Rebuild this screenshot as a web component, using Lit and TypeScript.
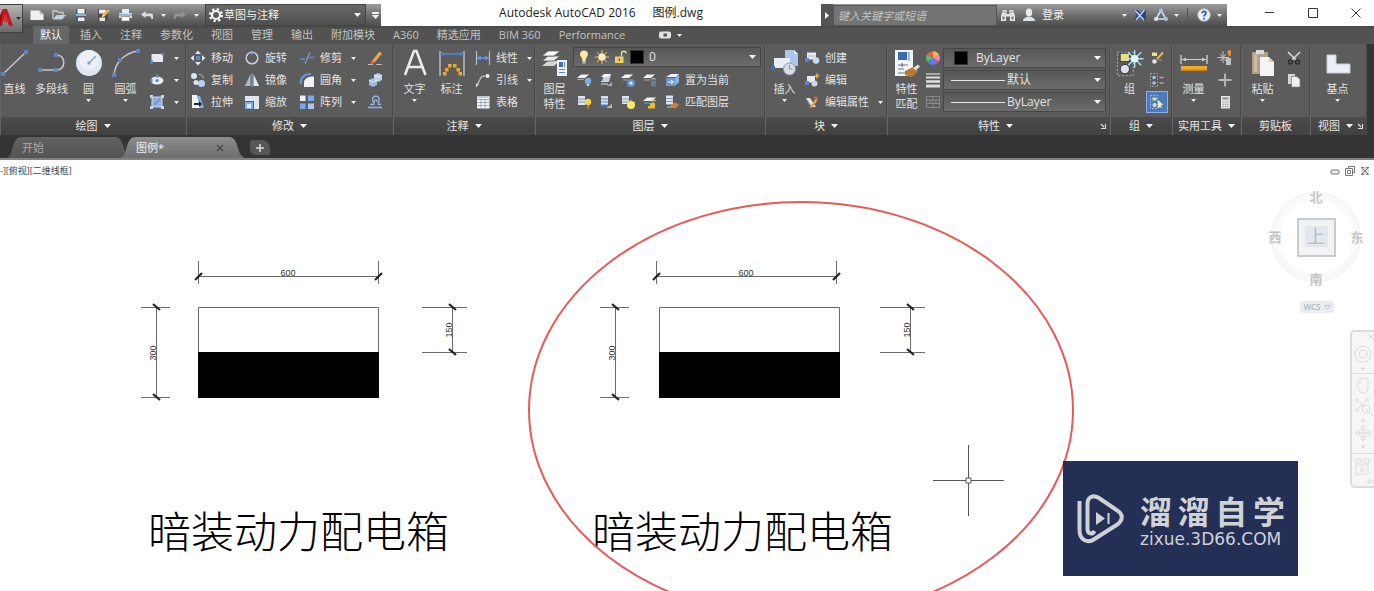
import { LitElement, html, svg, css, nothing, TemplateResult, SVGTemplateResult } from "lit";
import { customElement, property } from "lit/decorators.js";
import { classMap } from "lit/directives/class-map.js";

/* ---------- icon library ---------- */

interface Glyph { w: number; h: number; art: SVGTemplateResult; }

const g = (w: number, h: number, art: SVGTemplateResult): Glyph => ({ w, h, art });

const ICONS: Record<string, Glyph> = {
  /* quick access */
  newFile: g(16, 16, svg`<path d="M1.500 3.500h9l4 4v5.500h-13z" fill="#f0f0f0"/><path d="M10.500 3.500v4h4z" fill="#bdbdbd"/>`),
  open: g(16, 16, svg`<path d="M2 12V4h4l1.500 1.500H12V8" fill="none" stroke="#c9c9c9" stroke-width="1.300"/><path d="M2 12.500 5.500 8H15l-4 4.500z" fill="#c3d0de"/>`),
  save: g(16, 16, svg`<path d="M3 2h10v12H3z" fill="#4d5b6b"/><path d="M4.500 2h7v4.500h-7z" fill="#f2f2f2"/><path d="M3 7h10v2H3z" fill="#8fb3da"/><path d="M5 10.500h6.500V14H5z" fill="#ececec"/>`),
  saveAs: g(16, 16, svg`<path d="M3 2h10v12H3z" fill="#4d4d4d"/><path d="M4 2.500h7v4H4z" fill="#ededed"/><path d="M4.500 10.500H10V14H4.500z" fill="#e6e6e6"/><path d="m7 10 1-3 4.500-5L15 4l-5 5z" fill="#eeb04a"/><path d="m7 10 1-3 2 2z" fill="#f9e2b0"/>`),
  print: g(16, 16, svg`<path d="M5 2h7v4H5z" fill="#e9eef4"/><path d="M2 6h13v5H2z" fill="#d4d9df"/><path d="M4.500 9.500h8V14h-8z" fill="#fff" stroke="#7f8b99" stroke-width=".8"/><path d="M2 8h13" stroke="#6d90b8"/>`),
  undo: g(16, 16, svg`<path d="M2 7.500 6.500 4v2.500H12c1.500 0 2 1 2 2.500V12h-1.700c0-2-.3-2.800-1.500-2.800H6.500V11z" fill="#dcdcdc"/>`),
  redo: g(16, 16, svg`<path d="M14 7.500 9.500 4v2.500H4C2.500 6.500 2 7.500 2 9v3h1.700c0-2 .3-2.800 1.500-2.800h4.300V11z" fill="#959595"/>`),
  gear: g(16, 16, svg`<circle cx="8" cy="8" r="4" fill="none" stroke="#f4f4f4" stroke-width="2.200"/><circle cx="8" cy="8" r="6" fill="none" stroke="#f4f4f4" stroke-width="2.200" stroke-dasharray="2.350 2.360"/>`),
  binoculars: g(16, 16, svg`<path d="M3 3h3.500v4h3V3H13l2 6v5h-5V9.500H6V14H1V9z" fill="#e4e4e4"/><path d="M2.500 9.500h2v3h-2zM11.500 9.500h2v3h-2z" fill="#777"/><path d="M3.500 5h2M10.500 5h2" stroke="#777"/>`),
  user: g(16, 16, svg`<ellipse cx="8" cy="5.500" rx="3.200" ry="4" fill="#ececec"/><path d="M2 14c0-3 2.500-3.300 4.300-4.300h3.400C11.500 10.700 14 11 14 14z" fill="#dfe3e8"/>`),
  exchange: g(16, 16, svg`<path d="M2 3h4l2 3 3-3h3v10h-3L8 10l-2 3H2l2.500-5z" fill="#27438f"/><path d="m3 3.500 9 9.500M12.500 3 4 13" stroke="#c3d1f1" stroke-width="1.500"/>`),
  a360: g(16, 16, svg`<path d="M8 3.500 3 12h10z" fill="none" stroke="#d3def2" stroke-width="1.600"/><circle cx="8" cy="3.500" r="2" fill="#a9c1ea"/><circle cx="3" cy="12" r="2" fill="#dbe6f8"/><circle cx="13" cy="12" r="2" fill="#a9c1ea"/>`),
  help: g(16, 16, svg`<circle cx="8" cy="8" r="6.200" fill="#eef3fb" stroke="#b8c2d2"/><path d="M6 6.300C6 3.800 10 3.900 10 6.300 10 7.800 8 7.800 8 9.600M8 10.800v1.700" fill="none" stroke="#2b56ab" stroke-width="1.700"/>`),
  camera: g(16, 16, svg`<rect x="2" y="4.500" width="12" height="7" rx="2" fill="#e4e4e4"/><rect x="6.500" y="6.500" width="3.500" height="3" fill="#555"/>`),
  /* draw */
  line: g(28, 28, svg`<path d="M2 25 25 3" stroke="#c6c6c6" stroke-width="1.400"/><path d="M0 23h4v4H0zM23 1h4v4h-4z" fill="#5b86cc"/>`),
  polyline: g(28, 28, svg`<path d="M2 21h17c9 0 9-15 0-15h-1" fill="none" stroke="#c6c6c6" stroke-width="1.600"/><path d="M0 19h4v4H0zM16 19h4v4h-4zM16 4h4v4h-4z" fill="#5b86cc"/>`),
  circle: g(28, 28, svg`<circle cx="14" cy="14" r="13" fill="#dfe6f1"/><circle cx="14" cy="11" r="10" fill="#edf1f7"/><path d="m14 14 7-7" stroke="#7c9fd4" stroke-width="1.300"/><path d="M12.500 12.500h3v3h-3z" fill="#7c9fd4"/>`),
  arc: g(28, 28, svg`<path d="M2 26C3 13 13 4 26 2" fill="none" stroke="#c6c6c6" stroke-width="1.500"/><path d="M0 24h4v4H0zM6 9h4v4H6zM24 0h4v4h-4z" fill="#5b86cc"/>`),
  rect: g(16, 16, svg`<path d="M2.500 4H14v8H2.500z" fill="#e7ecf4"/><path d="M15 2v5l-3-3z" fill="#5b86cc"/><path d="M1 10.500h3v3H1z" fill="#5b86cc"/>`),
  ellipse: g(16, 16, svg`<ellipse cx="8" cy="8.500" rx="6.500" ry="4" fill="#e7ecf4"/><circle cx="8" cy="8.500" r="1.600" fill="#5b86cc"/><path d="M6.800 2.500h3v3h-3zM1 7h2.500v3H1z" fill="#5b86cc"/>`),
  hatch: g(16, 16, svg`<path d="M3 3h10v10H3z" fill="#93b4e6" stroke="#c5d6ef"/><path d="M1 1h3v3H1zM12 1h3v3h-3zM1 12h3v3H1zM12 12h3v3h-3z" fill="#c8d6ea"/><path d="m5 11 6-6" stroke="#6f98d6" stroke-width="2"/>`),
  /* modify */
  move: g(16, 16, svg`<path d="m8 .5 3 3.500H5zM8 15.500 5 12h6zM.5 8 4 5v6zM15.500 8 12 11V5z" fill="#dfe6f0"/><path d="M6 6h4v4H6z" fill="#5b86cc"/>`),
  rotate: g(16, 16, svg`<circle cx="8" cy="8" r="5.800" fill="none" stroke="#c9ced6" stroke-width="1.500"/><path d="m6.500.5 4 2-3.500 2.500z" fill="#7ea4dc"/>`),
  trim: g(16, 16, svg`<path d="M1 9h5M9.500 7.500H15" stroke="#5b8bd0" stroke-width="1.600"/><path d="M11 2 6 14" stroke="#7f9fce" stroke-width="1.200"/>`),
  erase: g(16, 16, svg`<path d="m5 11 7.500-9.500L15 3.500 8 12z" fill="#efaa3d"/><path d="m3 13 2-2.500L8 12l-2 2z" fill="#e8694d"/><path d="M1 14.500h5M9 14.500h6" stroke="#bbb" stroke-width="1.200"/>`),
  copy: g(16, 16, svg`<circle cx="4" cy="4" r="3" fill="#dbe5f4"/><circle cx="11.500" cy="11.500" r="3.500" fill="#b7d0f2"/><circle cx="6" cy="10.500" r="2.500" fill="#dbe5f4"/><path d="M9 2.500c3 0 4 1 4 4" fill="none" stroke="#b9b9b9"/>`),
  mirror: g(16, 16, svg`<path d="M6.500 2v12H1z" fill="#aeb9c8"/><path d="M9.500 2v12H15z" fill="#dfe7f2"/><path d="M8 1v14" stroke="#7ea4dc"/>`),
  fillet: g(16, 16, svg`<path d="M5 15v-5c1-4 4-5.500 10-5.500V15z" fill="#f1f3f6"/><path d="M1.500 12C1.500 5 5 2 12 2" fill="none" stroke="#6c98d9" stroke-width="2"/>`),
  explode: g(16, 16, svg`<path d="m2 8 4-2 4 2v5l-4 2-4-2z" fill="#9cb9df"/><path d="m7 3 4-2 4 2v5l-4 2-4-2z" fill="#b9cfeb"/><path d="m7 3 4 2 4-2M2 8l4 2 4-2" stroke="#eef4fb" fill="none"/>`),
  stretch: g(16, 16, svg`<path d="M2 1h5l4 13H2z" fill="#f3f5f8"/><path d="M7 2h3l4 12h-4z" fill="#7fb0ee"/><path d="M4 9h5v-2l3 3-3 3v-2H4z" fill="#222"/>`),
  scale: g(16, 16, svg`<path d="M1 2h14v13h-5V7H1z" fill="#dfe6f0"/><path d="M1 8h8v7H1z" fill="#7fb0ee"/><path d="M3 10h4v4H3z" fill="#dfe9f8"/>`),
  array: g(16, 16, svg`<path d="M1 1.500h5.500V7H1z" fill="#f1f1f1"/><path d="M9 1.500h6V7H9zM1 9.500h5.500V15H1z" fill="#79a9ea"/><path d="M9 9.500h6V15H9z" fill="#a8c6f0"/>`),
  offset: g(16, 16, svg`<path d="M1 13.500h14M3 10.500h4V9C4 6 6 2 9 2s4 4 2.500 6.500v2H14" fill="none" stroke="#8fb2e2" stroke-width="1.400"/><path d="M7.500 8C7 5 10.500 4.500 10 8" fill="none" stroke="#c9d6e8"/>`),
  /* annotate */
  bigA: g(28, 28, svg`<path d="M4 26 13 2h2.500l9 24M7.500 18h13.500" fill="none" stroke="#ececec" stroke-width="2.600"/>`),
  dimension: g(28, 28, svg`<path d="M2 2v25M26 2v25" stroke="#c4c4c4" stroke-width="1.400"/><path d="M2 5h24" stroke="#4f86d8" stroke-width="1.600"/><path d="m2 5 4-2v4zM26 5l-4-2v4z" fill="#4f86d8"/><path d="M10 15h3.500v3.500H10zM15 15h3.500v3.500H15zM7 19h3.500v3.500H7zM18.500 19H22v3.500h-3.500zM5 23h3.500v3.500H5zM20.500 23H24v3.500h-3.500z" fill="#e8a92e"/>`),
  linear: g(16, 16, svg`<path d="M1.500 1v14M14.500 1v14" stroke="#b5bcc6" stroke-width="1.200"/><path d="M2 8h12" stroke="#5b9bea" stroke-width="1.500"/><path d="m2 8 4-2.500v5zM14 8l-4-2.500v5z" fill="#5b9bea"/>`),
  leader: g(16, 16, svg`<path d="M1 15 6 5.500C7 4 8 4 10 4" fill="none" stroke="#c0c0c0" stroke-width="1.400"/><circle cx="12.500" cy="4" r="2" fill="#f1f1f1"/><path d="m1 15 .5-4L4 12.500z" fill="#d8d8d8"/>`),
  table: g(16, 16, svg`<path d="M2 2h12.500v12.500H2z" fill="#f3f5f8"/><path d="M2 5.500h12.500M2 8.500h12.500M2 11.500h12.500M6 5v9.500M10.200 5v9.500" stroke="#98a5b8" stroke-width=".9"/><path d="M2 2h12.500v2H2z" fill="#bccbe0"/>`),
  /* layers */
  layerProps: g(28, 28, svg`<path d="m1 17 6-5h12l-6 5z" fill="#d5d5d5"/><path d="m1 12 6-5h12l-6 5z" fill="#ececec" stroke="#5c5c5c" stroke-width=".8"/><path d="m1 7 6-5h12l-6 5z" fill="#fff" stroke="#5c5c5c" stroke-width=".8"/><path d="M16 11h10v16H16z" fill="#eef2f8"/><path d="M18 13h4v5h-4z" fill="#3f6fb6"/><path d="M18 20.500h6M18 23.500h6M23.500 13v5" stroke="#5f84ba"/>`),
  bulb: g(16, 16, svg`<path d="M8 1.500c4.500 0 5 5 2.300 7L9.500 12h-3L5.700 8.500C3 6.500 3.500 1.500 8 1.500z" fill="#fbe9a4"/><path d="M6.500 12h3v2.500h-3z" fill="#c2c2c2"/>`),
  sun: g(16, 16, svg`<circle cx="8" cy="8" r="3.800" fill="#fbe07c"/><path d="M8 1v14M1 8h14M3 3l10 10M13 3 3 13" stroke="#f4d873" stroke-width=".9"/><circle cx="8" cy="8" r="3" fill="#fdf0bd"/>`),
  unlock: g(16, 16, svg`<path d="M3 7.500h8.500V14H3z" fill="#f0cf66"/><path d="M9.500 7.500V4.500c0-3 4.500-3 4.500 0" fill="none" stroke="#e8d9a2" stroke-width="1.400"/><path d="M6.500 9.500h1.500V12H6.500z" fill="#85681d"/>`),
  layerA: g(16, 16, svg`<path d="m1 6 4-3.500h8L9 6z" fill="#f3f3f3"/><path d="M1 7.500h7" stroke="#93a7c4"/><circle cx="12" cy="9" r="3.200" fill="#74b0ef"/><path d="M10.800 12h2.400v2h-2.400z" fill="#d5d5d5"/>`),
  layerB: g(16, 16, svg`<path d="M6 2h7l-2 8H4z" fill="#bcd2ec"/><path d="m3 5 3-3h7l-3 3z" fill="#f5f5f5"/><path d="M3 12h7M3 9.500h7" stroke="#ddd"/><path d="m9 14 5-4v4z" fill="#aaa"/>`),
  layerC: g(16, 16, svg`<path d="m1 6 4-3.500h8L9 6z" fill="#f3f3f3"/><path d="M3 8h5" stroke="#aaa"/><circle cx="11" cy="11" r="4" fill="#5d93dc"/><circle cx="11" cy="11" r="1.600" fill="#e3eefb"/>`),
  layerD: g(16, 16, svg`<path d="m1 6 4-3.500h8L9 6z" fill="#f3f3f3"/><path d="M2 8h6" stroke="#aaa"/><path d="M9 8.500h5v6H9z" fill="#6b7f8c"/><path d="M10 8V6.500h3V8" stroke="#a4c1be" fill="none"/>`),
  layerCurrent: g(16, 16, svg`<path d="m2 5 5-3h8l-3 3z" fill="#f5f5f5"/><path d="M2 6h9v8H2z" fill="#6d97ce"/><path d="m11 6 4-3v7l-4 4z" fill="#8db2e2"/><path d="M4 10h5M7 8l2.500 2L7 12" stroke="#fff" fill="none"/>`),
  layerE: g(16, 16, svg`<path d="M2 2h7v9H2z" fill="#dce5f0"/><path d="M2 5h7M2 8h7" stroke="#7e95b6"/><circle cx="12" cy="8" r="3.300" fill="#f6cf53"/><path d="M11 11h2.200v3.500H11z" fill="#bd8636"/>`),
  layerF: g(16, 16, svg`<path d="M3 2h7v9H3z" fill="#d4e1f0"/><path d="M3 5h7M3 8h7" stroke="#6d8db9"/><path d="m8 14 6-4v4z" fill="#bbb"/><path d="M3 11.500h7" stroke="#4779c4" stroke-width="2"/>`),
  layerG: g(16, 16, svg`<path d="M2 2h7v8H2z" fill="#dce5f0"/><path d="M2 5h7M2 8h7" stroke="#8b9cb5"/><circle cx="11" cy="11" r="4" fill="#fbe56b"/><path d="M11 5.500v2M15 8l-1.500 1" stroke="#f6cf53"/>`),
  layerH: g(16, 16, svg`<path d="m1 7 4-3.500h9L10 7z" fill="#f3f3f3"/><path d="M2 9h6" stroke="#6d97ce"/><path d="M8 9h5v5.500H6V12h2z" fill="#e3bd3b"/><path d="M11 9V6.500h3" stroke="#d7c16c" fill="none"/>`),
  layerMatch: g(16, 16, svg`<path d="M2 1.500h7v9H2z" fill="#dce5f0"/><path d="M2 4.500h7M2 7.500h7" stroke="#8b9cb5"/><path d="m7 11 4-2.500 4 2-3 3.500-4 0z" fill="#de7b33"/><path d="M3 13h5" stroke="#ccc"/>`),
  /* block */
  insert: g(28, 28, svg`<path d="M14 1h9l4 4v12H14z" fill="#a8c8f0"/><path d="M23 1v4h4z" fill="#e3eefb"/><path d="M3 9h16v10H3z" fill="#e9edf3"/><path d="M0 17h4v4H0z" fill="#3f6fb6"/><circle cx="18.500" cy="20" r="6" fill="#d6dde7" stroke="#8f9cae"/><path d="M18.500 16v4h3" stroke="#7f92ad" fill="none"/>`),
  create: g(16, 16, svg`<path d="M3 2.500h9v7H3z" fill="#e6ebf2"/><circle cx="12" cy="10.500" r="3.300" fill="#cfd8e4"/><path d="M1 8h4v4H1z" fill="#5b86cc"/><path d="M4 6h7" stroke="#aab6c8"/>`),
  editBlock: g(16, 16, svg`<path d="M3 4h8v6.500H3z" fill="#e6ebf2"/><circle cx="10.500" cy="11.500" r="3" fill="#cfd8e4"/><path d="M1 9h4v4H1z" fill="#5b86cc"/><path d="M13 .5 14 3l2 .8-2 1L13 7l-1-2.200-2-1L12 3z" fill="#f2b13b"/>`),
  editAttr: g(16, 16, svg`<path d="M2 4h4l6 9H8z" fill="#e5e5e5"/><path d="m6 13 5-7.500L13.500 4 13 7l-5 7z" fill="#e8a63c"/><path d="m2 4 5 10" stroke="#999"/><path d="M10 3.500h3" stroke="#d45f4d" stroke-width="2"/>`),
  /* properties */
  matchProps: g(28, 28, svg`<path d="M2 1h18v26H2z" fill="#f2f4f7"/><path d="M5 3h9v8H5z" fill="#346cb5"/><path d="M16 3v9" stroke="#9fb6d4" stroke-width="2"/><path d="M5 16h10M5 20h6M5 24h8" stroke="#66768c"/><path d="M9 14v4" stroke="#2f5d9d"/><path d="m12 22 8-4 5 4-6 6-7-2z" fill="#c0762f"/><path d="m20 19 5-3.500 2 2-4 4z" fill="#ddd"/>`),
  wheel: g(16, 16, svg`<path d="M8 8V1.200A6.800 6.800 0 0 1 13.900 4.600z" fill="#f2c14a"/><path d="M8 8 13.900 4.600a6.800 6.800 0 0 1 0 6.800z" fill="#f08bb0"/><path d="m8 8 5.900 3.400A6.800 6.800 0 0 1 8 14.800z" fill="#9365c9"/><path d="M8 8v6.800a6.800 6.800 0 0 1-5.900-3.400z" fill="#4d83dc"/><path d="m8 8-5.900 3.400a6.800 6.800 0 0 1 0-6.800z" fill="#5fbf67"/><path d="M8 8 2.100 4.600A6.800 6.800 0 0 1 8 1.200z" fill="#e06545"/>`),
  weights: g(16, 16, svg`<path d="M1 2h14" stroke="#ddd" stroke-width="1.200"/><path d="M1 5.500h14" stroke="#ddd" stroke-width="2"/><path d="M1 9.500h14" stroke="#ddd" stroke-width="2.600"/><path d="M1 14h14" stroke="#ddd" stroke-width="3"/>`),
  linetype: g(16, 16, svg`<path d="M1.500 2.500h13v11h-13zM1.500 6h13M1.500 9.500h13M5 6v3.500M8 2.500V13.500M11 6v3.500" fill="none" stroke="#8a8a8a"/>`),
  /* group */
  group: g(30, 30, svg`<path d="M1.500 3.500h17v25h-17z" fill="none" stroke="#b6b6b6" stroke-dasharray="2 2"/><path d="M4 4h11v10H4z" fill="#333"/><path d="M5 5h9v8H5z" fill="#ecdf7d"/><circle cx="9.500" cy="21.500" r="5" fill="#dce4ee" stroke="#333"/><path d="M20 1v19M10.500 10.500h19M13 3.500l14 14M27 3.500l-14 14" stroke="#a9e0f5" stroke-width="1.500"/><circle cx="20" cy="10.500" r="4" fill="#e9f9fe"/>`),
  groupEdit: g(16, 16, svg`<path d="M3 2.500h5v3.500H3z" fill="#ecdf7d"/><circle cx="5.500" cy="11.500" r="2.300" fill="#dce4ee"/><path d="m8 9 6-6.500" stroke="#e8b34a" stroke-width="2"/><path d="M9.500 10h3" stroke="#aaa"/>`),
  ungroup: g(16, 16, svg`<path d="M1.500 1.500h7v13h-7z" fill="none" stroke="#aaa" stroke-dasharray="1.500 1.500"/><path d="M3.500 4h3v3h-3zM3.500 9.500h3v3h-3z" fill="#a9c4e6"/><path d="M10.500 5.500h4M10.500 11h4" stroke="#aaa" stroke-width="1.500"/>`),
  groupSel: g(16, 16, svg`<path d="M1.500 1.500h7v13h-7z" fill="none" stroke="#a9c4f0" stroke-dasharray="1.500 1.500"/><path d="M3.500 3.500h4v3h-4z" fill="#ecdf7d"/><circle cx="5.500" cy="11" r="2" fill="#dce4ee"/><path d="m9 6 5.500 5H12l1 3-2-1-2 1z" fill="#e7edb5"/>`),
  /* utilities */
  measure: g(28, 28, svg`<path d="M1 6v9M27 6v9" stroke="#ccc" stroke-width="1.400"/><path d="M2 10.500h24" stroke="#ccc"/><path d="m2 10.500 4-2v4zM26 10.500l-4-2v4z" fill="#ccc"/><path d="M1 17h26v5H1z" fill="#f0ab2c"/><path d="M1 20.500h26V22H1z" fill="#c98413"/>`),
  pick: g(16, 16, svg`<path d="M6 1v12M.5 7.500h11M3 4l6 7M9 4l-6 7" stroke="#c9c9c9"/><path d="M9 8h5v7H9z" fill="#bfc3c8"/><path d="m10 1 4-1v5l-2 2z" fill="#f0902c"/>`),
  point: g(16, 16, svg`<path d="M8 1.500v13M1.500 8h13" stroke="#d8d8d8" stroke-width="1.400"/><circle cx="8" cy="8" r="2" fill="#b5b5b5"/>`),
  calc: g(16, 16, svg`<path d="M4 2h9v12.500H4z" fill="#e4e4e4"/><path d="M5.500 3.500h6v2h-6z" fill="#8b8b8b"/><path d="M5.500 8h6M5.500 10.300h6M5.500 12.500h6" stroke="#999" stroke-dasharray="1.500 .8"/>`),
  /* clipboard, view */
  paste: g(28, 28, svg`<path d="M3 3h16v22H3z" fill="#b49f86"/><path d="M7 1h8v4H7z" fill="#dcdcdc"/><path d="M5 5h3v18H5z" fill="#cdbca6"/><path d="M11 8h9l5 5v14H11z" fill="#f4f4f5"/><path d="M20 8v5h5z" fill="#c9c9ce"/>`),
  cut: g(16, 16, svg`<path d="m2 2 8 8M14 2l-8 8" stroke="#d9d9d9" stroke-width="1.600"/><circle cx="4.500" cy="12" r="2" fill="none" stroke="#2d2d2d" stroke-width="1.500"/><circle cx="11.500" cy="12" r="2" fill="none" stroke="#2d2d2d" stroke-width="1.500"/>`),
  copyClip: g(16, 16, svg`<path d="M2 2h7v10H2z" fill="#d5d5d5"/><path d="M5.500 4.500H11l3 3V15H5.500z" fill="#f2f2f2" stroke="#777" stroke-width=".7"/>`),
  base: g(28, 28, svg`<path d="M3 6h9v9h14v9H3z" fill="#eceff3" stroke="#c6cbd2"/>`),
};

const icon = (name: string): TemplateResult => {
  const i = ICONS[name];
  return html`<svg class="ico" width=${i.w} height=${i.h} viewBox="0 0 ${i.w} ${i.h}" aria-hidden="true">${i.art}</svg>`;
};

const caret = (size: "s" | "m" = "s") =>
  size === "s"
    ? html`<svg class="ico" width="5" height="3" viewBox="0 0 5 3" aria-hidden="true"><path d="M0 0h5L2.500 3z" fill="#f0f0f0"/></svg>`
    : html`<svg class="ico" width="7" height="4" viewBox="0 0 7 4" aria-hidden="true"><path d="M0 0h7L3.500 4z" fill="#f4f4f4"/></svg>`;

const launcher = html`<svg class="ico" width="6" height="6" viewBox="0 0 6 6" aria-hidden="true"><path d="m1 1 3 3M5.500 1v4.500H1" fill="none" stroke="#e0e0e0" stroke-width="1.200"/></svg>`;

const shared = css`
  * { box-sizing: border-box; }
  button, select, input {
    font: inherit; color: inherit; background: none; border: 0; margin: 0; padding: 0;
    appearance: none; outline: none;
  }
  .ico { display: block; flex: none; }
`;

const UI_FONT = css`"Open Sans", "Noto Sans", "Noto Sans CJK SC", sans-serif`;

/* ---------- title bar ---------- */

@customElement("cad-titlebar")
export class CadTitlebar extends LitElement {
  static styles = [shared, css`
    :host { display: flex; height: 26px; background: #fff; color: #f0f0f0; }
    .quick, .info {
      display: flex; align-items: center; margin-top: 4px; flex: none;
      background: linear-gradient(#9b9b9b, #6c6c6c 55%, #4e4e4e);
    }
    .quick { width: 381px; padding-left: 29px; gap: 6px; }
    .quick .space {
      display: flex; align-items: center; gap: 0; width: 162px; height: 22px; padding: 0 4px 0 2px;
      background: linear-gradient(#686868, #4f4f4f); border: 1px solid #444;
    }
    .space select { flex: 1; min-width: 0; }
    .more { display: flex; flex-direction: column; align-items: center; gap: 1px; width: 12px; margin-left: -3px; }
    .more::before { content: ""; width: 7px; height: 2px; background: #f0f0f0; }
    h1 {
      flex: 1; min-width: 0; margin: 0; display: flex; justify-content: center; align-items: center; gap: 17px;
      font-size: 12px; font-weight: 400; color: #1c1c1c; white-space: nowrap; overflow: hidden;
    }
    .info { width: 406px; }
    .arrow { width: 12px; height: 22px; display: grid; place-items: center; background: #555; }
    .info input { width: 164px; height: 21px; padding: 0 4px; background: #747474; border: 1px solid #555; }
    .info input::placeholder { color: #c4c4c4; font-style: italic; opacity: 1; }
    .find { margin-left: 3px; }
    .login { display: flex; align-items: center; gap: 5px; margin-left: 5px; flex: 1; }
    .tail { display: flex; align-items: center; gap: 5px; padding-right: 5px; }
    .rule { width: 1px; height: 15px; background: #555; margin: 0 3px; }
    .window { display: flex; justify-content: space-between; width: 147px; padding: 0 13px 0 38px; align-items: center; flex: none; }
    .window button { display: grid; place-items: center; }
  `];

  render() {
    return html`
      <div class="quick">
        ${[["newFile", "新建"], ["open", "打开"], ["save", "保存"], ["saveAs", "另存为"], ["print", "打印"], ["undo", "放弃"]].map(
          ([i, t]) => html`<button aria-label=${t}>${icon(i)}</button>`)}
        <button aria-label="放弃列表">${caret()}</button>
        <button aria-label="重做">${icon("redo")}</button>
        <button aria-label="重做列表">${caret()}</button>
        <label class="space">${icon("gear")}
          <select aria-label="工作空间"><option>草图与注释</option></select>${caret("m")}</label>
        <button class="more" aria-label="自定义">${caret("m")}</button>
      </div>
      <h1><span>Autodesk AutoCAD 2016</span><span>图例.dwg</span></h1>
      <div class="info">
        <button class="arrow" aria-label="收拢"><svg class="ico" width="4" height="7" viewBox="0 0 4 7"><path d="M0 0v7l4-3.500z" fill="#f4f4f4"/></svg></button>
        <input type="search" placeholder="键入关键字或短语" aria-label="搜索" />
        <button class="find" aria-label="查找">${icon("binoculars")}</button>
        <button class="login">${icon("user")}<span>登录</span></button>
        <div class="tail">
          ${caret()}
          <button aria-label="Exchange">${icon("exchange")}</button>
          <button aria-label="A360">${icon("a360")}</button>
          ${caret()}
          <span class="rule"></span>
          <button aria-label="帮助">${icon("help")}</button>
          ${caret()}
        </div>
      </div>
      <div class="window">
        <button aria-label="最小化"><svg class="ico" width="10" height="10"><path d="M0 4.500h9" stroke="#333"/></svg></button>
        <button aria-label="最大化"><svg class="ico" width="10" height="10"><path d="M.5.5h9v9h-9z" fill="none" stroke="#333"/></svg></button>
        <button aria-label="关闭"><svg class="ico" width="10" height="10"><path d="m.5.5 9 9m0-9-9 9" stroke="#333"/></svg></button>
      </div>`;
  }
}

/* ---------- ribbon ---------- */

interface Small { icon: string; text?: string; menu?: boolean; on?: boolean; }

const big = (name: string, text: string | string[], menu = false) => html`
  <button class="big">
    ${icon(name)}
    ${(Array.isArray(text) ? text : [text]).map((t) => html`<span>${t}</span>`)}
    ${menu ? caret() : nothing}
  </button>`;

const small = (s: Small) => html`
  <button class=${classMap({ small: true, on: !!s.on })} aria-label=${s.text ?? s.icon}>
    ${icon(s.icon)}${s.text ? html`<span>${s.text}</span>` : nothing}${s.menu ? html`<i>${caret()}</i>` : nothing}
  </button>`;

@customElement("cad-panel")
export class CadPanel extends LitElement {
  @property() heading = "";
  @property({ type: Boolean }) fixed = false;
  @property({ type: Boolean }) launch = false;

  static styles = [shared, css`
    :host { display: flex; flex-direction: column; min-width: 0; border-right: 1px solid #4a4a4a; border-left: 1px solid #646464; }
    .body { height: 73px; padding-top: 3px; overflow: hidden; }
    footer {
      display: flex; align-items: center; justify-content: center; height: 18px; padding: 0 3px;
      background: linear-gradient(#4c4c4c, #414141); color: #e6e6e6;
    }
    footer button { display: flex; align-items: center; gap: 6px; margin: auto; line-height: 16px; white-space: nowrap; }
  `];

  render() {
    return html`
      <div class="body"><slot></slot></div>
      <footer>
        <button>${this.heading}${this.fixed ? nothing : caret("m")}</button>
        ${this.launch ? launcher : nothing}
      </footer>`;
  }
}

@customElement("cad-ribbon")
export class CadRibbon extends LitElement {
  static styles = [shared, css`
    :host { display: block; color: #e2e2e2; background: #535353; }
    nav { display: flex; gap: 4px; height: 18px; padding-left: 33px; background: linear-gradient(#474747, #525252 3px); }
    nav button { padding: 0 7px; line-height: 18px; color: #c2c2c2; white-space: nowrap; }
    nav .active { color: #f4f4f4; background: #686868; }
    nav .cam { display: flex; align-items: center; gap: 4px; margin-left: 14px; }
    .panels {
      display: grid; background: #353535; padding-right: 7px;
      grid-template-columns: 186fr 207fr 142fr 230fr 122fr 223fr 62fr 69fr 69fr 57fr;
    }
    cad-panel { background: #5c5c5c; }
    .row { display: flex; height: 70px; }
    .big {
      display: flex; flex-direction: column; align-items: center; flex: none; width: 37px; padding-top: 2px;
      line-height: 15px; white-space: nowrap;
    }
    .big .ico:first-child { height: 28px; }
    .big .ico + span { margin-top: 4px; }
    .big .ico:last-child { margin-top: 3px; }
    .stack { display: grid; grid-auto-rows: 22px; grid-auto-columns: max-content; align-content: start; align-items: center; }
    .small { display: flex; align-items: center; gap: 5px; height: 20px; line-height: 20px; white-space: nowrap; }
    .small i { display: block; margin-left: 4px; }
    .on { background: #4d79c0; outline: 1px solid #8fb0e6; padding: 0 2px; margin-left: -2px; }
    .crop { margin-left: -5px; }
    .draw { margin-left: 1px; }
    .modify { padding-left: 3px; grid-template-columns: 54px 55px 68px 20px; height: 70px; }
    .inset { padding-left: 2px; }
    .view { padding-left: 8px; }
    .layer { flex: 1; min-width: 0; padding-right: 3px; }
    .layer .combo { gap: 2px; margin-bottom: 2px; padding-left: 2px; }
    .tools { display: flex; gap: 6px; height: 22px; align-items: center; padding-left: 3px; }
    .combo {
      display: flex; align-items: center; height: 20px; padding: 0 4px; gap: 5px; border: 1px solid #464646;
      background: linear-gradient(#575757, #6c6c6c); min-width: 0;
    }
    .combo select { flex: 1; min-width: 0; height: 18px; font-size: 12px; }
    .swatch { width: 14px; height: 14px; background: #000; border: 1px solid #333; flex: none; }
    .swatch + select { margin-left: 3px; }
    .stroke { width: 54px; height: 1px; background: #e8e8e8; flex: none; }
    .props { grid-template-columns: 16px 1fr; column-gap: 2px; flex: 1; padding-right: 3px; }
    .props .combo:nth-of-type(1) { padding-left: 10px; }
    .props .line { padding-left: 7px; gap: 2px; }
    .side { padding-left: 5px; }
  `];

  render() {
    const tabs = ["默认", "插入", "注释", "参数化", "视图", "管理", "输出", "附加模块", "A360", "精选应用", "BIM 360", "Performance"];
    const modify: Small[] = [
      { icon: "move", text: "移动" }, { icon: "rotate", text: "旋转" }, { icon: "trim", text: "修剪", menu: true }, { icon: "erase" },
      { icon: "copy", text: "复制" }, { icon: "mirror", text: "镜像" }, { icon: "fillet", text: "圆角", menu: true }, { icon: "explode" },
      { icon: "stretch", text: "拉伸" }, { icon: "scale", text: "缩放" }, { icon: "array", text: "阵列", menu: true }, { icon: "offset" },
    ];
    return html`
      <nav>
        ${tabs.map((t, i) => html`<button class=${classMap({ active: i === 0 })}>${t}</button>`)}
        <button class="cam" aria-label="显示选项">${icon("camera")}${caret()}</button>
      </nav>
      <div class="panels">
        <cad-panel heading="绘图">
          <div class="row crop">
            ${big("line", "直线")}${big("polyline", "多段线")}${big("circle", "圆", true)}${big("arc", "圆弧", true)}
            <div class="stack side">${["rect", "ellipse", "hatch"].map((i) => small({ icon: i, menu: true }))}</div>
          </div>
        </cad-panel>
        <cad-panel heading="修改"><div class="stack modify">${modify.map(small)}</div></cad-panel>
        <cad-panel heading="注释">
          <div class="row inset">
            ${big("bigA", "文字", true)}${big("dimension", "标注")}
            <div class="stack side">
              ${[{ icon: "linear", text: "线性", menu: true }, { icon: "leader", text: "引线", menu: true }, { icon: "table", text: "表格" }].map(small)}
            </div>
          </div>
        </cad-panel>
        <cad-panel heading="图层">
          <div class="row">
            ${big("layerProps", ["图层", "特性"])}
            <div class="layer">
              <label class="combo">${icon("bulb")}${icon("sun")}${icon("unlock")}<span class="swatch"></span>
                <select aria-label="图层"><option>0</option></select>${caret("m")}</label>
              <div class="tools">${["layerA", "layerB", "layerC", "layerD"].map((i) => small({ icon: i }))}${small({ icon: "layerCurrent", text: "置为当前" })}</div>
              <div class="tools">${["layerE", "layerF", "layerG", "layerH"].map((i) => small({ icon: i }))}${small({ icon: "layerMatch", text: "匹配图层" })}</div>
            </div>
          </div>
        </cad-panel>
        <cad-panel heading="块">
          <div class="row">
            ${big("insert", "插入", true)}
            <div class="stack draw">
              ${[{ icon: "create", text: "创建" }, { icon: "editBlock", text: "编辑" }, { icon: "editAttr", text: "编辑属性", menu: true }].map(small)}
            </div>
          </div>
        </cad-panel>
        <cad-panel heading="特性" launch>
          <div class="row">
            ${big("matchProps", ["特性", "匹配"])}
            <div class="stack props">
              ${icon("wheel")}<label class="combo"><span class="swatch"></span><select aria-label="颜色"><option>ByLayer</option></select>${caret("m")}</label>
              ${icon("weights")}<label class="combo line"><span class="stroke"></span><select aria-label="线宽"><option>默认</option></select>${caret("m")}</label>
              ${icon("linetype")}<label class="combo line"><span class="stroke"></span><select aria-label="线型"><option>ByLayer</option></select>${caret("m")}</label>
            </div>
          </div>
        </cad-panel>
        <cad-panel heading="组">
          <div class="row">
            ${big("group", "组")}
            <div class="stack draw">${small({ icon: "groupEdit" })}${small({ icon: "ungroup" })}${small({ icon: "groupSel", on: true })}</div>
          </div>
        </cad-panel>
        <cad-panel heading="实用工具">
          <div class="row inset">
            ${big("measure", "测量", true)}
            <div class="stack side">${["pick", "point", "calc"].map((i) => small({ icon: i }))}</div>
          </div>
        </cad-panel>
        <cad-panel heading="剪贴板" fixed>
          <div class="row inset">
            ${big("paste", "粘贴", true)}
            <div class="stack side">${["cut", "copyClip"].map((i) => small({ icon: i }))}</div>
          </div>
        </cad-panel>
        <cad-panel heading="视图" launch><div class="row view">${big("base", "基点", true)}</div></cad-panel>
      </div>`;
  }
}

/* ---------- document tabs ---------- */

@customElement("cad-filetabs")
export class CadFileTabs extends LitElement {
  static styles = [shared, css`
    :host { display: flex; height: 25px; padding: 2px 0 0 6px; background: #343434; border-bottom: 2px solid #828282; align-items: flex-end; }
    .tab {
      position: relative; display: flex; align-items: center; justify-content: space-between; width: 122px; height: 21px;
      padding: 0 18px 0 16px; color: #a9a9a9; isolation: isolate;
    }
    .tab svg.back { position: absolute; left: 0; top: 0; z-index: -1; width: 126px; height: 21px; }
    .active { color: #f2f2f2; margin-left: -8px; }
    .plus { width: 20px; height: 15px; margin: 0 0 3px 8px; background: #565656; border-radius: 3px 8px 2px 6px; display: grid; place-items: center; }
  `];

  private back(id: string, top: string, bottom: string) {
    return html`<svg class="back" viewBox="0 0 126 21" aria-hidden="true">
      <defs><linearGradient id=${id} x1="0" y1="0" x2="0" y2="1"><stop offset="0" stop-color=${top}/><stop offset="1" stop-color=${bottom}/></linearGradient></defs>
      <path d="M0 21c5-1 5-6 7-12s4-9 9-9h92c5 0 7 2 9 8s3 12 9 13z" fill="url(#${id})"/></svg>`;
  }

  render() {
    return html`
      <button class="tab">${this.back("idle", "#616161", "#545454")}<span>开始</span></button>
      <button class="tab active">${this.back("current", "#8d8d8d", "#6e6e6e")}<span>图例*</span>
        <svg class="ico" width="8" height="8"><path d="m1 1 6 6m0-6L1 7" stroke="#4c4c4c" stroke-width="1.500"/></svg></button>
      <button class="plus" aria-label="新图形"><svg class="ico" width="8" height="8"><path d="M4 0v8M0 4h8" stroke="#ddd" stroke-width="1.500"/></svg></button>`;
  }
}

/* ---------- drawing area ---------- */

/* x positions of one electrical box symbol and its dimensions */
interface BoxSymbol { box: number; top: number; left: number; right: number; label: number; }

const SYMBOLS: BoxSymbol[] = [
  { box: 198, top: 198, left: 156, right: 452, label: 148 },
  { box: 659, top: 656, left: 615, right: 910, label: 592 },
];

const hTick = (x: number, y: number) => svg`<path class="tick" d="M${x - 3} ${y + 4}l7-7"/>`;
const vTick = (x: number, y: number) => svg`<path class="tick" d="M${x - 3} ${y - 3}l7 6"/>`;

const symbolArt = (s: BoxSymbol) => svg`
  <path class="thin" d="M${s.top + 0.5} 101v23M${s.top + 180.5} 101v23M${s.top} 116.500h180"/>
  ${hTick(s.top, 116)}${hTick(s.top + 180, 116)}
  <text class="dim" x=${s.top + 90} y="116">600</text>
  <path class="thin" d="M${s.left - 15} 147.500h29M${s.left - 15} 237.500h29M${s.left + 0.5} 147v90"/>
  ${vTick(s.left, 147)}${vTick(s.left, 237)}
  <text class="dim" transform="translate(${s.left} 193) rotate(-90)">300</text>
  <path class="thin" d="M${s.right - 30} 147.500h45M${s.right - 30} 192.500h45M${s.right + 0.5} 147v45"/>
  ${vTick(s.right, 147)}${vTick(s.right, 192)}
  <text class="dim" transform="translate(${s.right} 170) rotate(-90)">150</text>
  <path class="thin" d="M${s.box + 0.5} 147.500h180v90h-180z"/>
  <rect x=${s.box} y="192" width="181" height="46"/>
  <text class="name" x=${s.label} y="388">暗装动力配电箱</text>`;

@customElement("cad-canvas")
export class CadCanvas extends LitElement {
  static styles = [shared, css`
    :host { display: block; position: relative; flex: 1; min-height: 431px; background: #fff; overflow: hidden; }
    .sheet { display: block; width: 100%; height: 431px; }
    .thin { fill: none; stroke: #6b6b6b; stroke-width: 1; }
    .tick { stroke: #222; stroke-width: 2.200; }
    .dim { font: 9px "Liberation Sans", sans-serif; fill: #333; text-anchor: middle; }
    .name { font: 300 43px "Noto Sans CJK SC", sans-serif; fill: #000; }
    .ring { fill: none; stroke: #e75a5a; stroke-width: 2; }
    .cross { fill: none; stroke: #555; }
    .viewmode { position: absolute; left: 0; top: 4px; font-size: 9px; line-height: 13px; color: #444; white-space: nowrap; display: flex; }
    .docbtns { position: absolute; right: 4px; top: 6px; display: flex; gap: 5px; align-items: center; }
    .cube { position: absolute; right: 4px; top: 28px; width: 106px; height: 106px; }
    .cube text { font-size: 13px; font-weight: 700; fill: #c6c6c6; text-anchor: middle; }
    .cube .top { font-size: 18px; fill: #b4bcc6; font-weight: 400; }
    .wcs {
      position: absolute; right: 40px; top: 141px; width: 34px; height: 12px; display: flex; align-items: center; justify-content: center;
      gap: 3px; font-size: 8px; line-height: 12px; font-weight: 600; color: #b3b3be; background: #ececf4; border-radius: 2px;
    }
    .navbar {
      position: absolute; right: -4px; top: 170px; width: 28px; height: 158px; border: 2px solid #dcdcdc; border-radius: 5px; background: #f6f6f6;
    }
    .mark {
      position: absolute; right: 76px; top: 301px; width: 235px; height: 115px; padding: 0 13px 0 14px; background: #232f55; color: #d0d2d5;
      display: flex; align-items: center; justify-content: space-between;
    }
    .mark .words { display: flex; flex-direction: column; width: 145px; }
    .zh { display: flex; justify-content: space-between; font: 700 32px/40px "Noto Sans CJK SC", sans-serif; }
    .url { font: 17px/18px "DejaVu Sans", sans-serif; white-space: nowrap; }
  `];

  render() {
    return html`
      <svg class="sheet" role="img" aria-label="图例">
        ${SYMBOLS.map(symbolArt)}
        <ellipse class="ring" cx="801" cy="250" rx="272" ry="208"/>
        <path class="cross" d="M933 320.500h33M971 320.500h33M968.500 285v33M968.500 323v33M966 318h5v5h-5z"/>
      </svg>
      <div class="viewmode"><span>-]</span><span>[俯视]</span><span>[二维线框]</span></div>
      <div class="docbtns">
        <button aria-label="最小化"><svg class="ico" width="10" height="10"><rect x="1" y="4" width="8" height="4" rx="1" fill="#eee" stroke="#777"/></svg></button>
        <button aria-label="还原"><svg class="ico" width="10" height="10"><path d="M3.500 2V.5h6v6H8M.5 2.500h7v7h-7zM2.500 4.500h3v3h-3z" fill="none" stroke="#777"/></svg></button>
        <button aria-label="关闭"><svg class="ico" width="10" height="10"><path d="M1 1.500h8v7H1z" fill="#ddd"/><path d="m2 2 6 6m0-6L2 8M1 1.500h3M6 1.500h3M1 8.500h3M6 8.500h3" stroke="#777"/></svg></button>
      </div>
      <svg class="cube" viewBox="0 0 106 106" role="img" aria-label="ViewCube">
        <circle cx="52" cy="49" r="41" fill="none" stroke="#f9f9f9" stroke-width="7"/>
        <circle cx="52" cy="49" r="44.500" fill="none" stroke="#f2f2f2"/>
        <rect x="34" y="31" width="37" height="37" fill="#f1f3f4" stroke="#b9bdc0" stroke-width="1.500"/>
        <rect x="41" y="38" width="23" height="21" fill="#e4e8ee"/>
        <text class="top" x="52" y="55">上</text>
        <text x="52" y="14">北</text><text x="52" y="96">南</text><text x="11" y="54">西</text><text x="93" y="54">东</text>
      </svg>
      <button class="wcs">WCS<svg class="ico" width="7" height="5"><path d="M.5.5h6l-3 4z" fill="none" stroke="#c4c4cf"/></svg></button>
      <div class="navbar">
        <svg class="ico" width="22" height="154" fill="none" stroke="#dcdcdc" aria-hidden="true">
          <path d="m17 3 4 4m0-4-4 4M0 41.500h22M0 121.500h22"/>
          <circle cx="11" cy="22" r="8"/><circle cx="11" cy="22" r="4"/>
          <path d="m9 36h4l-2 2zM9 88h4l-2 2zM9 114h4l-2 2z" fill="#d0d0d0"/>
          <path d="M5 54c-1-5 2-4 3-2v-5c1-2 2-1 2 0 1-2 3-1 3 0 1-1 3-1 3 1v7c0 5-2 6-5 6s-4-3-6-7z"/>
          <path d="m4 67 12 12M16 67 4 79M4 70v-3h3M13 67h3v3M4 76v3h3" /><circle cx="14" cy="77" r="4"/><path d="m17 80 4 4"/>
          <path d="M11 93v16M3 101h16M8 96l3-3 3 3M8 106l3 3 3-3M6 98l-3 3 3 3M16 98l3 3-3 3"/><circle cx="11" cy="101" r="4"/>
          <path d="M4 127h5v4H4zM12 127h5v4h-5zM4 133h12v9H4zM9 135v5l4-2.500z"/><path d="M16 148h4v3h-4z"/>
        </svg>
      </div>
      <div class="mark">
        <svg class="ico" width="48" height="52" viewBox="0 0 48 52" fill="none" stroke="#cfd1d4" aria-hidden="true">
          <path d="M2.500 8v29c0 10 8 14 15 9l22-14c7-5 7-11 0-15L22 5C16 1.500 10.500 4 10.500 11v25c0 5 5 6 7 2" stroke-width="4"/>
          <path d="M19 19v13l9-6.500z" fill="#cfd1d4" stroke="none"/><path d="M31.500 20v11" stroke-width="2"/>
        </svg>
        <div class="words">
          <div class="zh"><span>溜</span><span>溜</span><span>自</span><span>学</span></div>
          <div class="url">zixue.3D66.COM</div>
        </div>
      </div>`;
  }
}

/* ---------- application ---------- */

@customElement("app-root")
export class AppRoot extends LitElement {
  static styles = [shared, css`
    :host {
      display: flex; flex-direction: column; position: relative; min-height: 100vh; overflow: hidden; background: #fff;
      font: 11px/16px ${UI_FONT};
    }
    .app {
      position: absolute; left: 0; top: 4px; width: 23px; height: 29px; z-index: 2;
      background: linear-gradient(#b5b5b5, #6a6a6a); border: 1px solid #3f3f3f; border-left: 0;
    }
  `];
  render() {
    return html`
      <button class="app" aria-label="应用程序菜单">
        <svg class="ico" width="22" height="27" viewBox="0 0 22 27"><path d="M-3 21 3 4h4l6 17H9L5 10l-3 11z" fill="#c41420"/><path d="M3 4 0 21h-5z" fill="#8e0d15"/><path d="m5 8 4 9H4z" fill="#e02a30"/><path d="M16 12h5l-2.500 3z" fill="#333"/></svg>
      </button>
      <cad-titlebar></cad-titlebar>
      <cad-ribbon></cad-ribbon>
      <cad-filetabs></cad-filetabs>
      <cad-canvas></cad-canvas>`;
  }
}
